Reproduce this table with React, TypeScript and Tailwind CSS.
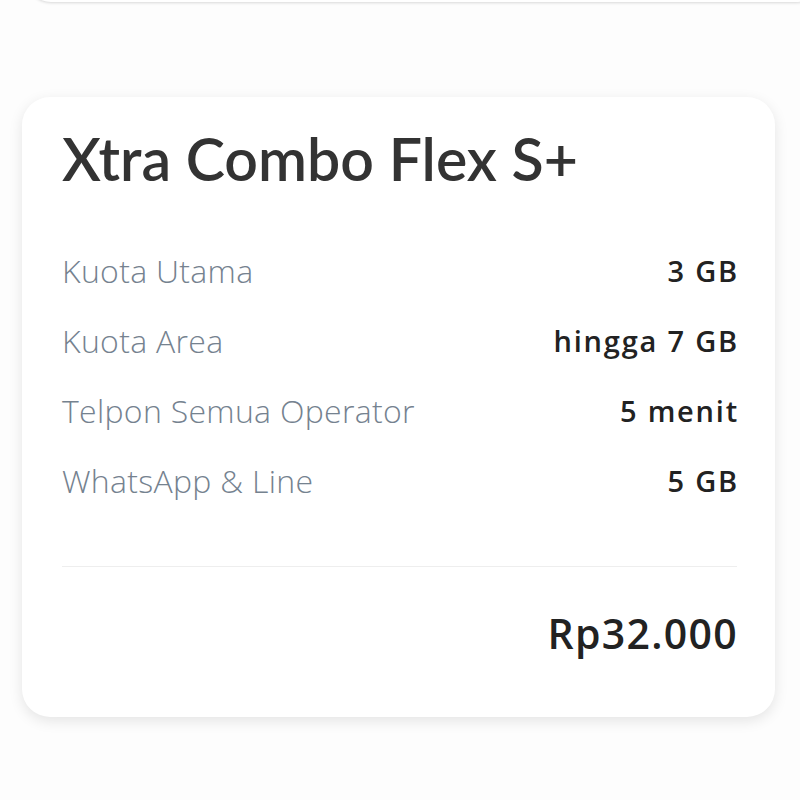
import React from 'react';

const rows = [
  { label: 'Kuota Utama', value: '3 GB' },
  { label: 'Kuota Area', value: 'hingga 7 GB' },
  { label: 'Telpon Semua Operator', value: '5 menit' },
  { label: 'WhatsApp & Line', value: '5 GB' },
];

const App: React.FC = () => {
  return (
    <div
      className="w-[800px] h-[800px] bg-[#fdfdfd] overflow-hidden relative"
      style={{ fontFamily: 'Lato, "Noto Sans", sans-serif' }}
    >
      {/* edge of previous card */}
      <div className="absolute left-[27px] right-[-20px] top-[-40px] h-[42px] bg-white rounded-b-[24px] shadow-[0_1px_3px_rgba(0,0,0,0.15)]" />

      <div className="pt-[97px] pl-[22px]">
        <div className="w-[753px] h-[620px] bg-white rounded-[28px] shadow-[0_4px_14px_rgba(0,0,0,0.10)] pl-10 pr-[38px] pt-[27px]">
          <h1 className="text-[59px] leading-[70px] font-semibold text-[#333333]">Xtra Combo Flex S+</h1>

          <div className="mt-[42px] flex flex-col" style={{ fontFamily: '"Open Sans", sans-serif' }}>
            {rows.map((row) => (
              <div key={row.label} className="flex items-center justify-between h-[70px]">
                <span className="text-[32px] font-light tracking-[0.3px] text-[#75828f]">{row.label}</span>
                <span className="text-[29px] font-semibold tracking-[1.8px] -mr-[2px] text-[#222222]">{row.value}</span>
              </div>
            ))}
          </div>

          <div className="mt-[50px] border-t border-[#eeeeee]" />

          <div className="mt-[41px] flex justify-end" style={{ fontFamily: '"Open Sans", sans-serif' }}>
            <span className="text-[41px] leading-[50px] font-semibold tracking-[1.3px] -mr-[1px] text-[#222222]">Rp32.000</span>
          </div>
        </div>
      </div>
    </div>
  );
};

export default App;
